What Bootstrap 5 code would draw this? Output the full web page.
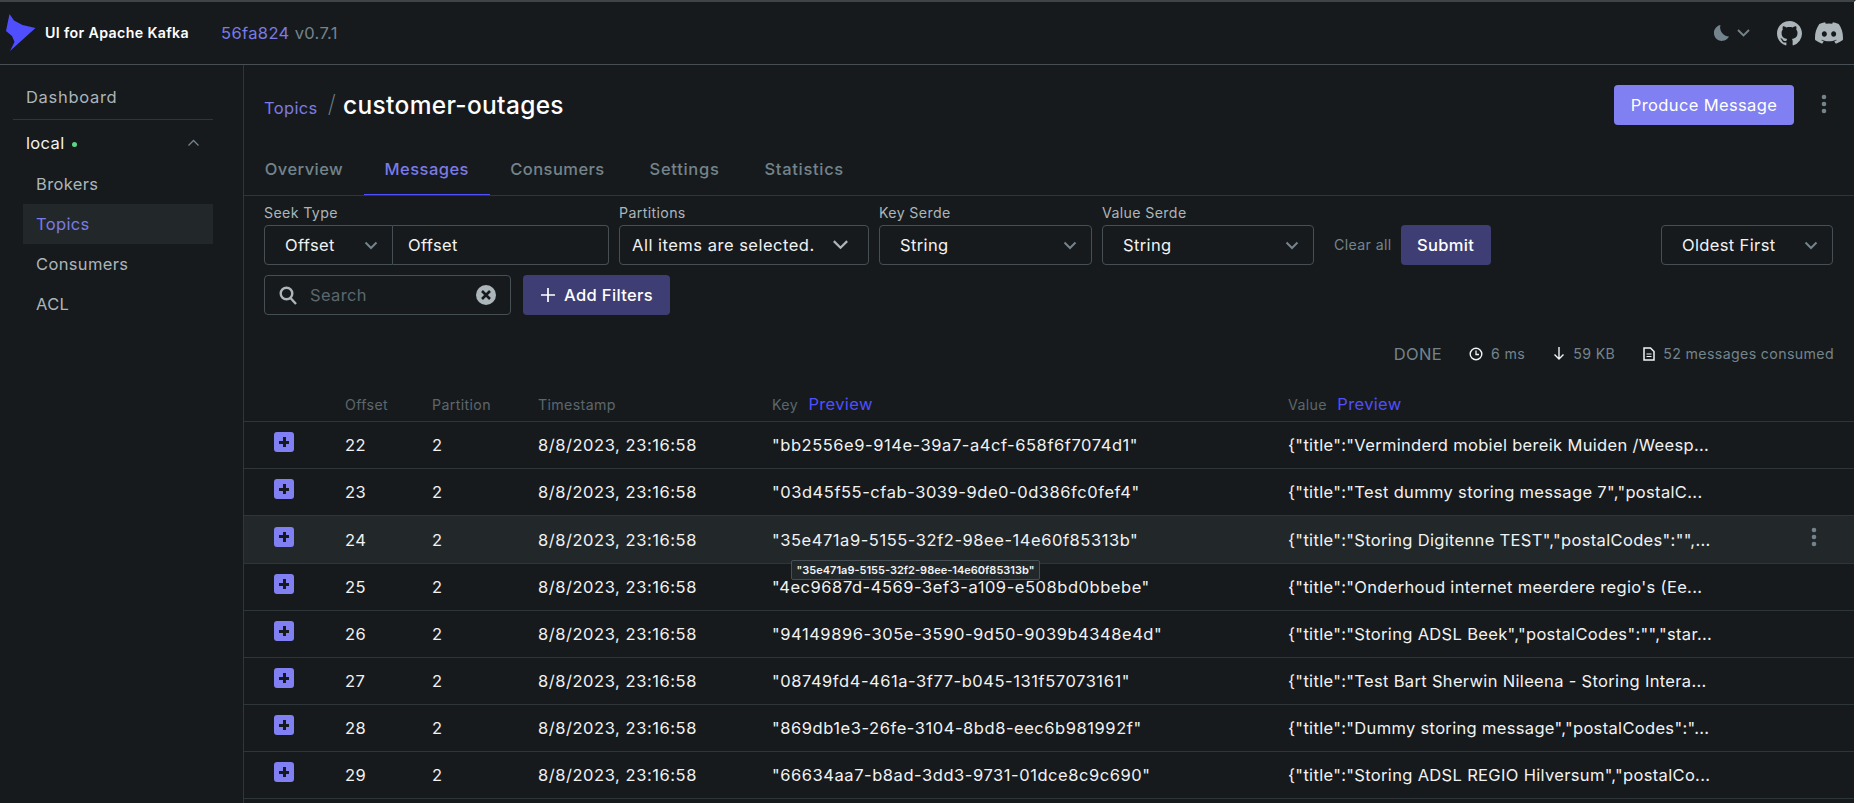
<!DOCTYPE html>
<html lang="en" data-bs-theme="dark">
<head>
<meta charset="utf-8">
<title>UI for Apache Kafka</title>
<link href="https://cdn.jsdelivr.net/npm/bootstrap@5.3.0/dist/css/bootstrap.min.css" rel="stylesheet">
<style>
:root{--kf-bg:#171a1c;--kf-line:#2f3639;--kf-line2:#454f54;--kf-mute:#73848c;--kf-soft:#abb5ba;--kf-white:#f1f2f3;--kf-brand:#7b7be6;--kf-blue:#4f4fff;}
html,body{height:803px;overflow:hidden;background:var(--kf-bg);}
body{font-family:Inter,"Liberation Sans",sans-serif;font-size:16.5px;letter-spacing:.36px;color:var(--kf-white);border-top:2px solid #3f4447;border-right:2px solid #fff;}
.kf-top{height:63px;border-bottom:1px solid var(--kf-line2);padding:0 11px 0 6px;}
.kf-logo{width:30px;height:38px;margin-top:-1px;}
.kf-name{font-weight:600;font-size:14.2px;margin-left:9px;color:#fff;}
.kf-ver{margin-left:32px;color:var(--kf-mute);font-size:16.5px;}
.kf-ver a{color:var(--kf-brand);text-decoration:none;}
.kf-gh{margin-left:27px;}
.kf-dc{margin-left:13px;}
.kf-body{height:738px;}
.kf-side{width:244px;flex:none;border-right:1px solid var(--kf-line);padding:11px 30px 0 13px;}
.kf-side a{display:flex;align-items:center;color:var(--kf-soft);text-decoration:none;height:40px;}
.kf-dash{padding-left:13px;height:44px!important;border-bottom:1px solid var(--kf-line);color:var(--kf-soft);letter-spacing:.7px;}
.kf-cluster{padding:0 13px 0 13px;margin-top:3px;margin-bottom:1px;color:var(--kf-white)!important;height:40px;justify-content:space-between;}
.kf-dot{display:inline-block;width:5px;height:5px;border-radius:50%;background:#5cd685;margin-left:7px;vertical-align:2px;}
.kf-sub{margin-left:10px;padding-left:13px;}
.kf-sub.kf-on{background:#22282a;color:var(--kf-brand)!important;}
.kf-main{flex:1;min-width:0;}
.kf-head{padding:20px 20px 0 20px;height:90px;}
.kf-title{height:40px;}
.kf-crumb{color:var(--kf-brand);text-decoration:none;margin-top:7px;}
.kf-sep{color:var(--kf-mute);font-size:24px;font-weight:200;margin:0 7px 2px 10px;line-height:1;}
.kf-h1{font-size:24.5px;font-weight:500;margin:2px 0 0;color:#fff;letter-spacing:.32px;}
.kf-prim{background:#8080f2;border:0;color:#fff;font-size:16.5px;height:40px;width:180px;padding:0;border-radius:4px;letter-spacing:.36px;}
.kf-prim:hover{background:#8080f2;color:#fff;}
.kf-kebab{margin-left:27px;margin-right:7px;}
.kf-tabs{height:41px;border-bottom:1px solid var(--kf-line);padding-left:0;}
.kf-tabs .nav-link{color:var(--kf-mute);padding:0 20.700px;height:40px;line-height:28px;font-weight:500;font-size:16.5px;border-radius:0;letter-spacing:.45px;}
.kf-tabs .nav-link:nth-child(n+4){margin-left:3.500px;letter-spacing:.7px;}
.kf-tabs .nav-link.active{color:var(--kf-brand);border-bottom:1px solid var(--kf-blue);}
.kf-filters{padding:7px 21px 0 20px;}
.kf-lab{font-size:14.2px;color:var(--kf-soft);height:20px;line-height:20px;margin-bottom:2px;display:block;}
.kf-filters .form-select,.kf-filters .form-control{background-color:transparent;border:1px solid var(--kf-line2);height:40px;border-radius:4px;color:var(--kf-white);font-size:16.5px;box-shadow:none;letter-spacing:.36px;}
.kf-filters .form-select{padding:0 30px 0 20px;background-image:url("data:image/svg+xml,%3Csvg xmlns='http://www.w3.org/2000/svg' viewBox='0 0 14 9'%3E%3Cpath d='M1.5 1.5 7 7l5.5-5.5' fill='none' stroke='%2373848c' stroke-width='2'/%3E%3C/svg%3E");background-size:14px 9px;background-position:right 14px center;}
.kf-w1{width:129px;border-radius:4px 0 0 4px!important;flex:none;}
.kf-w2{width:216px;border-left:0!important;border-radius:0 4px 4px 0!important;padding-left:15px;}
.kf-w3{width:250px;padding-left:12px!important;letter-spacing:.5px!important;background-image:url("data:image/svg+xml,%3Csvg xmlns='http://www.w3.org/2000/svg' viewBox='0 0 14 9'%3E%3Cpath d='M1 1l6 6 6-6' fill='none' stroke='%23abb5ba' stroke-width='2'/%3E%3C/svg%3E")!important;background-size:17px 10px!important;background-position:right 19px center!important;}
.kf-w4{width:213px;}
.kf-w5{width:212px;}
.kf-w6{width:172px;}
.kf-gap{margin-left:2px;margin-right:8px;}
.kf-first{margin-left:0;}
.kf-last{margin-left:2px;}
.kf-clear{color:var(--kf-mute);font-size:14.2px;text-decoration:none;margin-left:20px;margin-right:9px;line-height:40px;}
.kf-dim{background:#3e3e74;border:0;color:#fff;height:40px;border-radius:4px;font-size:16.5px;font-weight:500;letter-spacing:.36px;}
.kf-dim:hover{background:#3e3e74;color:#fff;}
.kf-sub-btn{width:90px;padding:0;}
.kf-row2{gap:12px;margin-top:10px;}
.kf-search{width:247px;height:40px;border:1px solid var(--kf-line2);border-radius:4px;padding:0 14px;color:var(--kf-mute);}
.kf-ph{color:#5b676d;margin-left:13px;}
.kf-add{width:147px;padding:0;}
.kf-status{height:48px;margin-top:15px;padding:0 20px 0 0;color:var(--kf-mute);font-size:14.2px;}
.kf-done{font-size:16.5px;margin-right:27px;}
.kf-st{margin-right:28px;}
.kf-st svg,.kf-st3 svg{margin-right:8px;}
.kf-tbl{table-layout:fixed;width:100%;margin:0;--bs-table-bg:transparent;--bs-table-color:var(--kf-white);border-color:var(--kf-line);}
.kf-tbl th{font-weight:400;font-size:14.2px;color:#5b676d;height:43px;padding:10px 0 0;vertical-align:middle;border-bottom:1px solid var(--kf-line);white-space:nowrap;}
.kf-tbl th a{color:var(--kf-blue);text-decoration:none;font-size:16.5px;margin-left:6px;}
.kf-tbl td{height:47px;padding:2px 0 0;vertical-align:middle;font-size:16.5px;white-space:nowrap;border-bottom:1px solid var(--kf-line);letter-spacing:.33px;}
.kf-tbl td:nth-child(4),.kf-tbl td:nth-child(5){letter-spacing:.55px;}
.kf-tbl tr.kf-hov td{background:#22282a;height:48px;}
.kf-exp{display:block;width:20px;height:20px;border-radius:3px;background:#8080f2;margin:-7px 0 0 30px;position:relative;}
.kf-exp::before,.kf-exp::after{content:"";position:absolute;background:#171a1c;}
.kf-exp::before{left:5px;top:8.500px;width:10px;height:3px;}
.kf-exp::after{left:8.500px;top:5px;width:3px;height:10px;}
.kf-c1{width:101px}.kf-c2{width:87px}.kf-c3{width:106px}.kf-c4{width:234px}.kf-c5{width:516px}
.kf-rowk{margin-right:37px;margin-top:-6px;}
.kf-tip{position:absolute;left:791px;top:560px;width:249px;height:20px;background:#22282a;border:1px solid var(--kf-line2);border-radius:2px;font-size:11px;font-weight:600;letter-spacing:0;line-height:18px;text-align:center;color:var(--kf-white);z-index:5;white-space:nowrap;}
</style>
</head>
<body>
<header class="kf-top d-flex align-items-center">
  <svg class="kf-logo" viewBox="0 0 30 38" aria-label="logo"><path d="M3.5 0 8 6.5 16.5 11l13 3L4 37l4.5-9-2.500-6L0 17Z" fill="#4f4fff"/></svg>
  <span class="kf-name">UI for Apache Kafka</span>
  <span class="kf-ver"><a href="#">56fa824</a> v0.7.1</span>
  <div class="ms-auto d-flex align-items-center">
    <svg width="15" height="16" viewBox="0 0 15 16"><path d="M6.500 0A8 8 0 1 0 15 11.500 9 9 0 0 1 6.500 0Z" fill="#73848c"/></svg>
    <svg class="ms-2" width="13" height="8" viewBox="0 0 13 8"><path d="M1 1l5.500 5.500L12 1" fill="none" stroke="#73848c" stroke-width="1.800"/></svg>
    <svg class="kf-gh" width="25" height="25" viewBox="0 0 16 16"><path fill="#abb5ba" d="M8 0C3.58 0 0 3.58 0 8c0 3.54 2.29 6.53 5.47 7.59.4.07.55-.17.55-.38 0-.19-.01-.82-.01-1.49-2.01.37-2.53-.49-2.69-.94-.09-.23-.48-.94-.82-1.13-.28-.15-.68-.52-.01-.53.63-.01 1.08.58 1.23.82.72 1.21 1.87.87 2.33.66.07-.52.28-.87.51-1.07-1.78-.2-3.64-.89-3.64-3.95 0-.87.31-1.59.82-2.15-.08-.2-.36-1.02.08-2.12 0 0 .67-.21 2.2.82.64-.18 1.32-.27 2-.27.68 0 1.36.09 2 .27 1.53-1.04 2.2-.82 2.2-.82.44 1.1.16 1.92.08 2.12.51.56.82 1.27.82 2.15 0 3.07-1.87 3.75-3.65 3.95.29.25.54.73.54 1.48 0 1.07-.01 1.93-.01 2.2 0 .21.15.46.55.38A8.012 8.012 0 0 0 16 8c0-4.42-3.58-8-8-8z"/></svg>
    <svg class="kf-dc" width="28" height="28" viewBox="0 0 16 16"><path fill="#abb5ba" d="M13.545 2.907a13.227 13.227 0 0 0-3.257-1.011.05.05 0 0 0-.052.025c-.141.25-.297.577-.406.833a12.19 12.19 0 0 0-3.658 0 8.258 8.258 0 0 0-.412-.833.051.051 0 0 0-.052-.025c-1.125.194-2.22.534-3.257 1.011a.041.041 0 0 0-.021.018C.356 6.024-.213 9.047.066 12.032c.001.014.01.028.021.037a13.276 13.276 0 0 0 3.995 2.02.05.05 0 0 0 .056-.019c.308-.42.582-.863.818-1.329a.05.05 0 0 0-.01-.059.051.051 0 0 0-.018-.011 8.875 8.875 0 0 1-1.248-.595.05.05 0 0 1-.02-.066.051.051 0 0 1 .015-.019c.084-.063.168-.129.248-.195a.05.05 0 0 1 .051-.007c2.619 1.196 5.454 1.196 8.041 0a.052.052 0 0 1 .053.007c.08.066.164.132.248.195a.051.051 0 0 1-.004.085 8.254 8.254 0 0 1-1.249.594.05.05 0 0 0-.03.03.052.052 0 0 0 .003.041c.24.465.515.909.817 1.329a.05.05 0 0 0 .056.019 13.235 13.235 0 0 0 4.001-2.02.049.049 0 0 0 .021-.037c.334-3.451-.559-6.449-2.366-9.106a.034.034 0 0 0-.02-.019Zm-8.198 7.307c-.789 0-1.438-.724-1.438-1.612 0-.889.637-1.613 1.438-1.613.807 0 1.45.73 1.438 1.613 0 .888-.637 1.612-1.438 1.612Zm5.316 0c-.788 0-1.438-.724-1.438-1.612 0-.889.637-1.613 1.438-1.613.807 0 1.451.73 1.438 1.613 0 .888-.631 1.612-1.438 1.612Z"/></svg>
  </div>
</header>
<div class="kf-body d-flex">
  <aside class="kf-side">
    <a class="kf-dash" href="#">Dashboard</a>
    <a class="kf-cluster" href="#"><span>local<i class="kf-dot"></i></span>
      <svg width="13" height="8" viewBox="0 0 13 8"><path d="M1.500 6.500 6.500 1.500l5 5" fill="none" stroke="#73848c" stroke-width="1.300"/></svg></a>
    <a class="kf-sub" href="#">Brokers</a>
    <a class="kf-sub kf-on" href="#">Topics</a>
    <a class="kf-sub" href="#">Consumers</a>
    <a class="kf-sub" href="#">ACL</a>
  </aside>
  <main class="kf-main">
    <div class="kf-head d-flex align-items-start">
      <div class="kf-title d-flex align-items-center">
        <a class="kf-crumb" href="#">Topics</a><span class="kf-sep">/</span><h1 class="kf-h1">customer-outages</h1>
      </div>
      <button class="btn kf-prim ms-auto" type="button">Produce Message</button>
      <svg class="kf-kebab mt-2" width="6" height="22" viewBox="0 0 6 22"><circle cx="3" cy="4" r="2.300" fill="#73848c"/><circle cx="3" cy="11" r="2.300" fill="#73848c"/><circle cx="3" cy="18" r="2.300" fill="#73848c"/></svg>
    </div>
    <nav class="nav kf-tabs">
      <a class="nav-link" href="#">Overview</a>
      <a class="nav-link active" href="#">Messages</a>
      <a class="nav-link" href="#">Consumers</a>
      <a class="nav-link" href="#">Settings</a>
      <a class="nav-link" href="#">Statistics</a>
    </nav>
    <div class="kf-filters">
      <div class="d-flex align-items-end">
        <div class="kf-gap kf-first"><span class="kf-lab">Seek Type</span>
          <div class="d-flex">
            <select class="form-select kf-w1"><option>Offset</option></select>
            <input class="form-control kf-w2" value="Offset">
          </div></div>
        <div class="kf-gap"><span class="kf-lab">Partitions</span>
          <select class="form-select kf-w3"><option>All items are selected.</option></select></div>
        <div class="kf-gap"><span class="kf-lab">Key Serde</span>
          <select class="form-select kf-w4"><option>String</option></select></div>
        <div class="kf-last"><span class="kf-lab">Value Serde</span>
          <select class="form-select kf-w5"><option>String</option></select></div>
        <a class="kf-clear" href="#">Clear all</a>
        <button class="btn kf-dim kf-sub-btn" type="button">Submit</button>
        <div class="ms-auto"><select class="form-select kf-w6"><option>Oldest First</option></select></div>
      </div>
      <div class="d-flex kf-row2">
        <div class="kf-search d-flex align-items-center">
          <svg width="18" height="19" viewBox="0 0 18 19"><circle cx="7.500" cy="7.500" r="5.800" fill="none" stroke="#abb5ba" stroke-width="2.400"/><path d="M11.500 12 17 18" stroke="#abb5ba" stroke-width="2.400"/></svg>
          <span class="kf-ph flex-grow-1">Search</span>
          <svg width="20" height="20" viewBox="0 0 20 20"><circle cx="10" cy="10" r="10" fill="#abb5ba"/><path d="M6 6l8 8M14 6l-8 8" stroke="#171a1c" stroke-width="2.600"/></svg>
        </div>
        <button class="btn kf-dim kf-add d-flex align-items-center justify-content-center" type="button">
          <svg class="me-2" width="16" height="16" viewBox="0 0 16 16"><path d="M8 1v14M1 8h14" stroke="#fff" stroke-width="1.700"/></svg>Add Filters</button>
      </div>
    </div>
    <div class="kf-status d-flex align-items-center justify-content-end">
      <span class="kf-done">DONE</span>
      <span class="kf-st d-flex align-items-center"><svg width="14" height="14" viewBox="0 0 14 14"><circle cx="7" cy="7" r="5.800" fill="none" stroke="#f1f2f3" stroke-width="1.400"/><path d="M7 3.500V7.500H10" fill="none" stroke="#f1f2f3" stroke-width="1.300"/></svg>6 ms</span>
      <span class="kf-st d-flex align-items-center"><svg width="12" height="13" viewBox="0 0 12 13"><path d="M6 0v12M1.500 7.500 6 12l4.500-4.500" fill="none" stroke="#f1f2f3" stroke-width="1.400"/></svg>59 KB</span>
      <span class="kf-st3 d-flex align-items-center"><svg width="12" height="14" viewBox="0 0 12 14"><path d="M1 1h6.500L11 4.500V13H1Z" fill="none" stroke="#f1f2f3" stroke-width="1.500"/><path d="M3.500 7h5M3.500 9.500h5" stroke="#f1f2f3" stroke-width="1.200"/></svg>52 messages consumed</span>
    </div>
    <table class="table kf-tbl">
      <thead><tr><th class="kf-c1"></th><th class="kf-c2">Offset</th><th class="kf-c3">Partition</th><th class="kf-c4">Timestamp</th><th class="kf-c5">Key <a href="#">Preview</a></th><th>Value <a href="#">Preview</a></th></tr></thead>
      <tbody>
        <tr><td><span class="kf-exp"></span></td><td>22</td><td>2</td><td>8/8/2023, 23:16:58</td><td>"bb2556e9-914e-39a7-a4cf-658f6f7074d1"</td><td>{"title":"Verminderd mobiel bereik Muiden /Weesp...</td></tr>
        <tr><td><span class="kf-exp"></span></td><td>23</td><td>2</td><td>8/8/2023, 23:16:58</td><td>"03d45f55-cfab-3039-9de0-0d386fc0fef4"</td><td>{"title":"Test dummy storing message 7","postalC...</td></tr>
        <tr class="kf-hov"><td><span class="kf-exp"></span></td><td>24</td><td>2</td><td>8/8/2023, 23:16:58</td><td>"35e471a9-5155-32f2-98ee-14e60f85313b"</td><td><div class="d-flex align-items-center justify-content-between"><span>{"title":"Storing Digitenne TEST","postalCodes":"",...</span><svg class="kf-rowk" width="6" height="22" viewBox="0 0 6 22"><circle cx="3" cy="4" r="2.300" fill="#73848c"/><circle cx="3" cy="11" r="2.300" fill="#73848c"/><circle cx="3" cy="18" r="2.300" fill="#73848c"/></svg></div></td></tr>
        <tr><td><span class="kf-exp"></span></td><td>25</td><td>2</td><td>8/8/2023, 23:16:58</td><td>"4ec9687d-4569-3ef3-a109-e508bd0bbebe"</td><td>{"title":"Onderhoud internet meerdere regio's (Ee...</td></tr>
        <tr><td><span class="kf-exp"></span></td><td>26</td><td>2</td><td>8/8/2023, 23:16:58</td><td>"94149896-305e-3590-9d50-9039b4348e4d"</td><td>{"title":"Storing ADSL Beek","postalCodes":"","star...</td></tr>
        <tr><td><span class="kf-exp"></span></td><td>27</td><td>2</td><td>8/8/2023, 23:16:58</td><td>"08749fd4-461a-3f77-b045-131f57073161"</td><td>{"title":"Test Bart Sherwin Nileena - Storing Intera...</td></tr>
        <tr><td><span class="kf-exp"></span></td><td>28</td><td>2</td><td>8/8/2023, 23:16:58</td><td>"869db1e3-26fe-3104-8bd8-eec6b981992f"</td><td>{"title":"Dummy storing message","postalCodes":"...</td></tr>
        <tr><td><span class="kf-exp"></span></td><td>29</td><td>2</td><td>8/8/2023, 23:16:58</td><td>"66634aa7-b8ad-3dd3-9731-01dce8c9c690"</td><td>{"title":"Storing ADSL REGIO Hilversum","postalCo...</td></tr>
      </tbody>
    </table>
  </main>
</div>
<div class="kf-tip">"35e471a9-5155-32f2-98ee-14e60f85313b"</div>
</body>
</html>
